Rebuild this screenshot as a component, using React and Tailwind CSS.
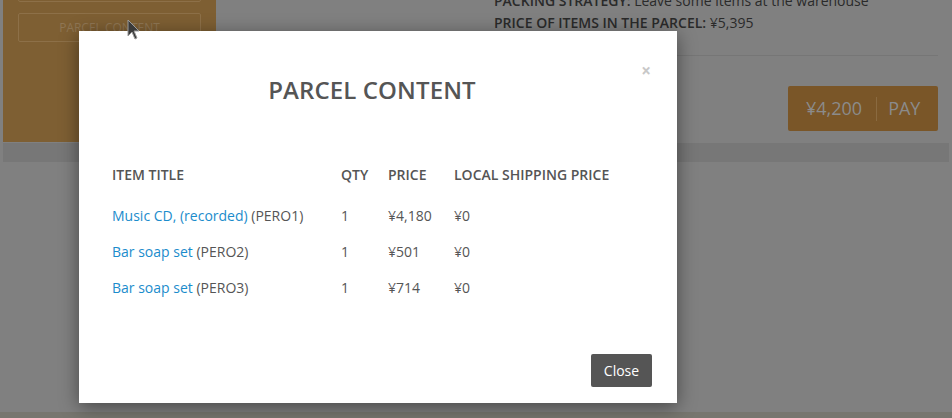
import React from 'react'

const items = [
  { title: 'Music CD, (recorded)', code: 'PERO1', qty: 1, price: '¥4,180', ship: '¥0' },
  { title: 'Bar soap set', code: 'PERO2', qty: 1, price: '¥501', ship: '¥0' },
  { title: 'Bar soap set', code: 'PERO3', qty: 1, price: '¥714', ship: '¥0' },
]

const Cursor = () => (
  <svg width="14" height="22" viewBox="0 0 14 22" className="absolute left-[127px] top-[19px]">
    <path d="M1 1 L1 17 L5 13 L8 20 L10 19 L7 12 L12 12 Z" fill="#3a3a3a" stroke="#9a9a9a" strokeWidth="1" />
  </svg>
)

const ParcelModal = () => (
  <div className="absolute left-[79px] top-[31px] w-[598px] h-[372px] bg-white shadow-[0_4px_18px_rgba(0,0,0,0.45)] flex flex-col">
    <div className="relative flex justify-center pt-[44px] pr-[12px]">
      <h2 className="text-[24px] leading-[30px] font-semibold text-[#555] tracking-[0.1px]">PARCEL CONTENT</h2>
      <span className="absolute right-[26px] top-[31px] text-[17px] font-bold text-[#c8c8c8] leading-none">×</span>
    </div>
    <div className="px-[33px] pt-[57px] flex-1">
      <table className="text-[14px] text-[#555] border-collapse">
        <thead>
          <tr className="text-[14px] h-[24px]">
            <th className="w-[229px] text-left font-semibold p-0">ITEM TITLE</th>
            <th className="w-[47px] text-left font-semibold p-0">QTY</th>
            <th className="w-[66px] text-left font-semibold p-0">PRICE</th>
            <th className="text-left font-semibold p-0">LOCAL SHIPPING PRICE</th>
          </tr>
        </thead>
        <tbody>
          <tr className="h-[11px]"><td colSpan={4}></td></tr>
          {items.map((it) => (
            <tr key={it.code} className="h-[36px]">
              <td className="p-0">
                <a className="text-[#1b8ccc]">{it.title}</a> ({it.code})
              </td>
              <td className="p-0">{it.qty}</td>
              <td className="p-0">{it.price}</td>
              <td className="p-0">{it.ship}</td>
            </tr>
          ))}
        </tbody>
      </table>
    </div>
    <div className="flex justify-end px-[25px] pb-[16px]">
      <button className="w-[61px] h-[33px] bg-[#555] text-white text-[14px] rounded-[2px]">Close</button>
    </div>
  </div>
)

export default function App() {
  return (
    <div className="relative w-[952px] h-[418px] overflow-hidden bg-[#808080] font-['Open_Sans',sans-serif]">
      <div className="flex flex-col h-full">
        <div className="flex px-[3px]">
          <div className="w-[213px] h-[162px] bg-[#7e5f33] px-[15px] -mt-[20px] flex flex-col gap-[11px]">
            <div className="h-[22px] border border-[#8d7048] rounded-[2px]"></div>
            <div className="h-[29px] border border-[#8d7048] rounded-[2px] flex items-center justify-center text-[12px] text-[#8f7654]">
              PARCEL CONTENT
            </div>
          </div>
          <div className="flex-1 pl-[278px] pr-[11px] flex flex-col">
            <p className="text-[14px] leading-[22px] text-[#2a2a2a] -mt-[10px]">
              <b className="font-semibold">PACKING STRATEGY:</b> Leave some items at the warehouse
            </p>
            <p className="text-[14px] leading-[22px] text-[#2a2a2a]">
              <b className="font-semibold">PRICE OF ITEMS IN THE PARCEL:</b> ¥5,395
            </p>
            <div className="h-px bg-[#767676] mt-[21px]"></div>
            <div className="flex justify-end mt-[30px]">
              <div className="w-[150px] h-[45px] bg-[#7a5628] rounded-[2px] flex items-center text-[18px] text-[#8b8b8b]">
                <span className="pl-[18px] pr-[14px]">¥4,200</span>
                <span className="w-px h-[24px] bg-[#8a6a40]"></span>
                <span className="pl-[11px]">PAY</span>
              </div>
            </div>
          </div>
        </div>
        <div className="mx-[3px] mt-[1px] h-[19px] bg-[#777]"></div>
        <div className="flex-1"></div>
        <div className="h-[6px] bg-[#77766f]"></div>
      </div>
      <ParcelModal />
      <Cursor />
    </div>
  )
}
